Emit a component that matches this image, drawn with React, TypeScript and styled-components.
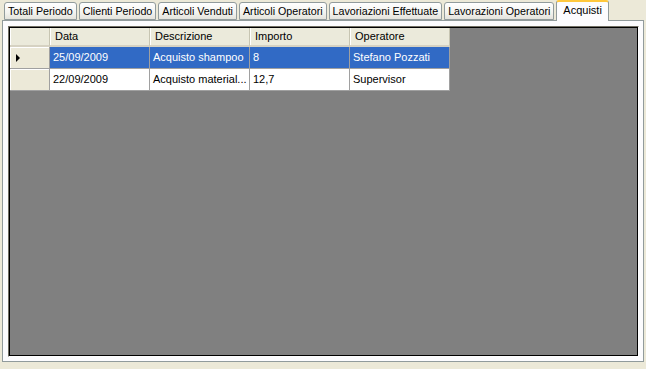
import React from "react";
import styled, { createGlobalStyle } from "styled-components";

const GlobalStyle = createGlobalStyle`
  html, body {
    margin: 0;
    padding: 0;
    background: #ece9d8;
  }
  body {
    font-family: Tahoma, "Liberation Sans", "DejaVu Sans", sans-serif;
    font-size: 11px;
  }
`;

const Window = styled.div`
  width: 646px;
  height: 369px;
  background: #ece9d8;
  display: flex;
  flex-direction: column;
  box-sizing: border-box;
  padding: 0 2px 0 2px;
  color: #000;
`;

const TabStrip = styled.div`
  display: flex;
  align-items: flex-end;
  height: 20px;
  padding-left: 2px;
  position: relative;
  z-index: 1;
`;

const Tab = styled.div<{ $active?: boolean }>`
  box-sizing: border-box;
  height: ${(p) => (p.$active ? "21px" : "18px")};
  margin-right: 2px;
  margin-bottom: ${(p) => (p.$active ? "-1px" : "0")};
  padding: ${(p) => (p.$active ? "2px 6px 0" : "2px 3px 0")};
  border: 1px solid #919b9c;
  border-bottom: ${(p) => (p.$active ? "none" : "1px solid #919b9c")};
  border-top: ${(p) => (p.$active ? "2px solid #ffc83c" : "1px solid #919b9c")};
  border-radius: 3px 3px 0 0;
  background: ${(p) =>
    p.$active ? "#fcfcfe" : "linear-gradient(#ffffff, #f3f3ef 60%, #e4e3dc)"};
  white-space: nowrap;
  line-height: 13px;
  font-size: ${(p) => (p.$active ? "11px" : "10.7px")};
`;

const Panel = styled.div`
  box-sizing: border-box;
  height: 342px;
  border: 1px solid #919b9c;
  background: #fcfcfe;
  padding: 5px 4px 4px 5px;
  display: flex;
`;

const GridBox = styled.div`
  flex: 1;
  background: #808080;
  border-top: 1px solid #716f64;
  border-left: 1px solid #716f64;
  border-right: 1px solid #fff;
  border-bottom: 1px solid #fff;
  box-shadow: inset 1px 1px 0 #000, inset -1px -1px 0 #000;
  padding: 1px;
`;

const Table = styled.div`
  display: grid;
  grid-template-columns: 40px 100px 100px 100px 100px;
  width: 440px;
`;

const HeaderCell = styled.div`
  box-sizing: border-box;
  height: 19px;
  padding: 2px 0 0 5px;
  background: #ebeadb;
  border-right: 1px solid #c7c5b2;
  border-bottom: 2px solid #d6d2c2;
  box-shadow: inset 1px 0 0 #fff;
  white-space: nowrap;
  overflow: hidden;
`;

const RowHeader = styled.div`
  box-sizing: border-box;
  height: 22px;
  background: #ece9d8;
  border-right: 1px solid #a0a0a0;
  border-bottom: 1px solid #a0a0a0;
  box-shadow: inset 1px 1px 0 #fff;
  display: flex;
  align-items: center;
  padding-left: 6px;
`;

const Arrow = styled.span`
  width: 0;
  height: 0;
  border-top: 4px solid transparent;
  border-bottom: 4px solid transparent;
  border-left: 4px solid #000;
`;

const Cell = styled.div<{ $selected?: boolean }>`
  box-sizing: border-box;
  height: 22px;
  padding: 4px 0 0 3px;
  background: ${(p) => (p.$selected ? "#316ac5" : "#fff")};
  color: ${(p) => (p.$selected ? "#fff" : "#000")};
  border-right: 1px solid #a0a0a0;
  border-bottom: 1px solid #a0a0a0;
  white-space: nowrap;
  overflow: hidden;
`;

const tabs = [
  "Totali Periodo",
  "Clienti Periodo",
  "Articoli Venduti",
  "Articoli Operatori",
  "Lavoriazioni Effettuate",
  "Lavorazioni Operatori",
  "Acquisti",
];

const columns = ["Data", "Descrizione", "Importo", "Operatore"];

const rows = [
  ["25/09/2009", "Acquisto shampoo", "8", "Stefano Pozzati"],
  ["22/09/2009", "Acquisto material...", "12,7", "Supervisor"],
];

export default function App() {
  return (
    <>
      <GlobalStyle />
      <Window>
        <TabStrip>
          {tabs.map((t) => (
            <Tab key={t} $active={t === "Acquisti"}>
              {t}
            </Tab>
          ))}
        </TabStrip>
        <Panel>
          <GridBox>
            <Table>
              <HeaderCell />
              {columns.map((c) => (
                <HeaderCell key={c}>{c}</HeaderCell>
              ))}
              {rows.map((r, i) => (
                <React.Fragment key={i}>
                  <RowHeader>{i === 0 && <Arrow />}</RowHeader>
                  {r.map((v, j) => (
                    <Cell key={j} $selected={i === 0}>
                      {v}
                    </Cell>
                  ))}
                </React.Fragment>
              ))}
            </Table>
          </GridBox>
        </Panel>
      </Window>
    </>
  );
}
